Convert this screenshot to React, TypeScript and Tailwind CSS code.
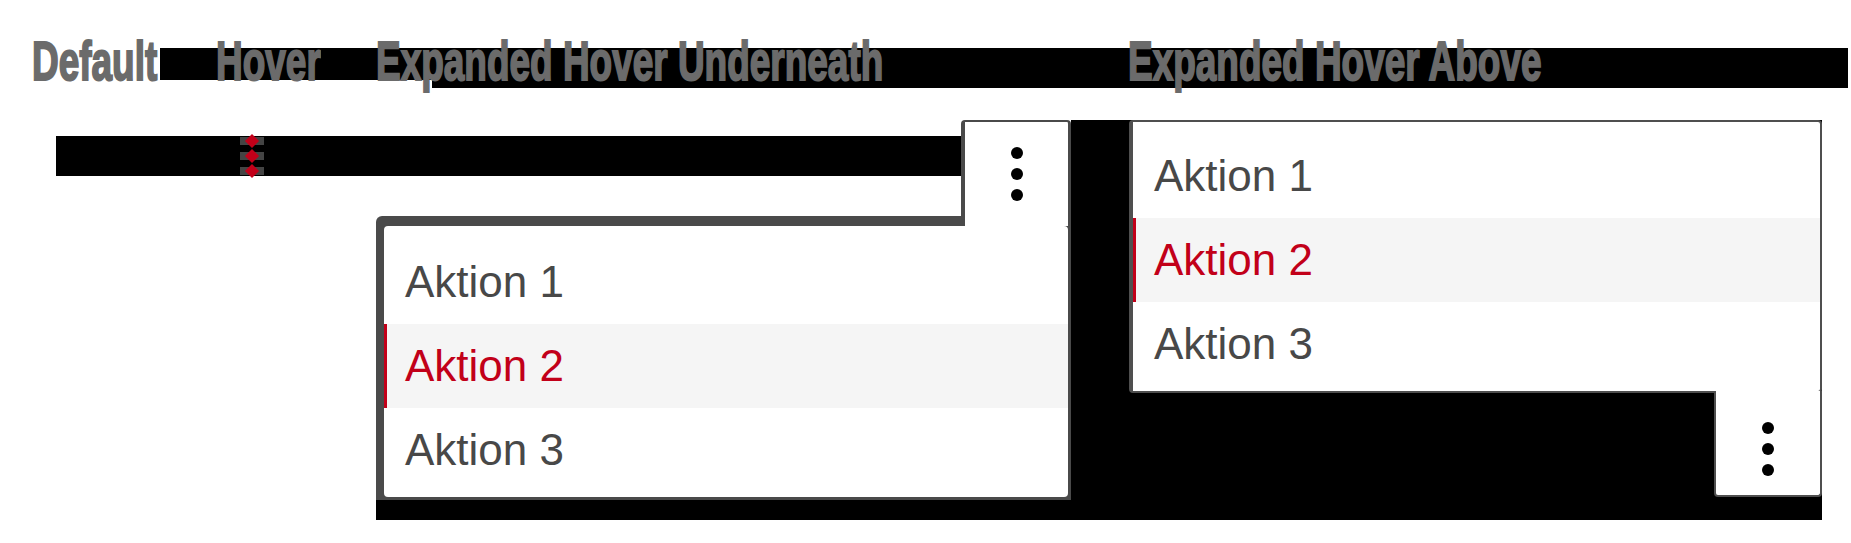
import React from 'react';

const items = ['Aktion 1', 'Aktion 2', 'Aktion 3'];

function Dots() {
  return (
    <div className="flex flex-col items-center gap-[9px]">
      <span className="w-3 h-3 rounded-full bg-black" />
      <span className="w-3 h-3 rounded-full bg-black" />
      <span className="w-3 h-3 rounded-full bg-black" />
    </div>
  );
}

function MenuRows() {
  return (
    <>
      {items.map((label, i) =>
        i === 1 ? (
          <div
            key={label}
            className="h-[84px] flex items-center bg-[#f5f5f5] border-l-[3px] border-[#c20019] pl-[18px] text-[44px] text-[#c20019]"
          >
            {label}
          </div>
        ) : (
          <div key={label} className="h-[84px] flex items-center pl-[21px] text-[44px] text-[#484848]">
            {label}
          </div>
        )
      )}
    </>
  );
}

function HeadLabel({ text, width }: { text: string; width: string }) {
  return (
    <div className={`${width} shrink-0`}>
      <span className="inline-block origin-left scale-x-[0.66] whitespace-nowrap font-bold text-[56px] leading-[56px] text-[#6b6b6b] [-webkit-text-stroke:2px_#6b6b6b]">
        {text}
      </span>
    </div>
  );
}

export default function App() {
  return (
    <div className="w-[1851px] h-[543px] bg-white overflow-hidden font-['Liberation_Sans',Arial,sans-serif]">
      {/* Heading row */}
      <div className="relative h-[56px] mt-[33px]">
        <div className="pt-[15px]">
          <div className="ml-[160px] w-[1688px] h-8 bg-black" />
          <div className="ml-[432px] w-[1416px] h-2 bg-black" />
        </div>
        <div className="absolute inset-0 flex pl-8">
          <HeadLabel text="Default" width="w-[184px]" />
          <HeadLabel text="Hover" width="w-[160px]" />
          <HeadLabel text="Expanded Hover Underneath" width="w-[752px]" />
          <HeadLabel text="Expanded Hover Above" width="w-[500px]" />
        </div>
      </div>

      {/* States */}
      <div className="flex items-start mt-[31px]">
        {/* Default / hover bar + expanded underneath */}
        <div className="flex flex-col ml-[56px] w-[1015px]">
          <div className="flex items-start">
            <div className="mt-4 h-10 w-[905px] bg-black">
              <div className="ml-[184px] w-6 h-10 flex flex-col justify-between py-[1px]">
                {[0, 1, 2].map((n) => (
                  <div key={n} className="h-[8px] w-6 bg-[#444] flex items-center justify-center overflow-visible">
                    <span className="w-[10px] h-[10px] rotate-45 bg-[#c20019]" />
                  </div>
                ))}
              </div>
            </div>
            <div className="relative z-10 w-[110px] h-[106px] bg-white border-t-2 border-l-4 border-r-[3px] border-[#4a4a4a] rounded-t-[4px] flex justify-center pt-[25px]">
              <Dots />
            </div>
          </div>
          <div className="-mt-[10px] ml-[320px] w-[695px] bg-[#4a4a4a] rounded-tl-[6px] pt-[10px] pl-[8px] pr-[3px] pb-[3px]">
            <div className="bg-white rounded-[4px] pt-[14px] pb-[5px]">
              <MenuRows />
            </div>
          </div>
          <div className="ml-[320px] w-[695px] h-5 bg-black" />
        </div>

        {/* Expanded above */}
        <div className="w-[751px] h-[400px] bg-black flex flex-col items-end">
          <div className="w-[693px] bg-white border-2 border-l-4 border-[#4f4f4f] rounded-[4px] pt-3 pb-[5px]">
            <MenuRows />
          </div>
          <div className="relative z-10 -mt-[2px] w-[108px] h-[106px] bg-white border-x-2 border-b-2 border-[#4f4f4f] rounded-b-[4px] flex justify-center pt-[31px]">
            <Dots />
          </div>
        </div>
      </div>
    </div>
  );
}
